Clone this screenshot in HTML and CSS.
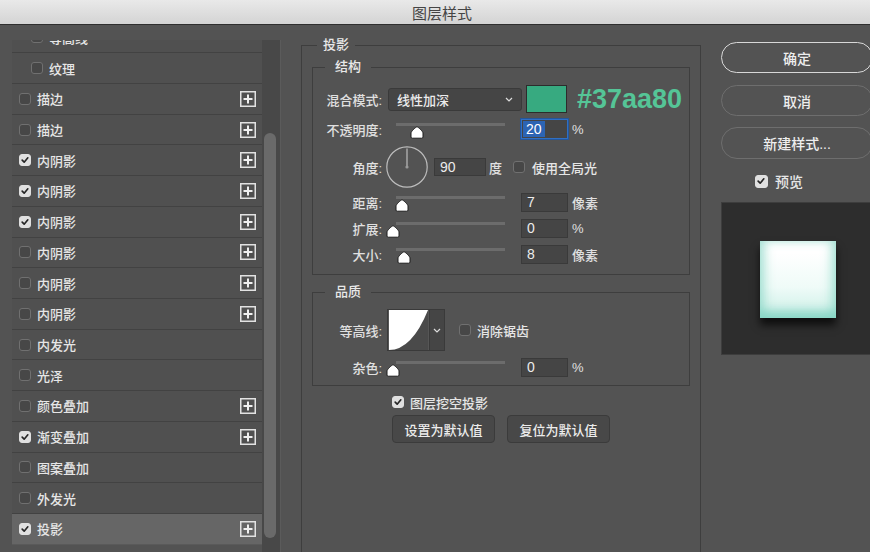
FILE: index.html
```html
<!DOCTYPE html>
<html lang="zh-CN">
<head>
<meta charset="utf-8">
<title>图层样式</title>
<link rel="stylesheet" href="styles.css">
</head>
<body>
<div class="titlebar">图层样式</div>
<div class="main">
  <aside class="sidebar">
    <div class="list">
      <div class="rows">
        <div class="row sub"><span class="cb"></span><span class="name">等高线</span></div>
        <div class="row sub"><span class="cb"></span><span class="name">纹理</span></div>
        <div class="row"><span class="cb"></span><span class="name">描边</span><svg class="plus" viewBox="0 0 16 16"><rect x="0.75" y="0.75" width="14.5" height="14.5"/><path d="M8 3.5V12.5M3.5 8H12.5"/></svg></div>
        <div class="row"><span class="cb"></span><span class="name">描边</span><svg class="plus" viewBox="0 0 16 16"><rect x="0.75" y="0.75" width="14.5" height="14.5"/><path d="M8 3.5V12.5M3.5 8H12.5"/></svg></div>
        <div class="row"><span class="cb on"><svg viewBox="0 0 12 12"><path d="M2.6 6.2L5 8.6L9.4 3.4"/></svg></span><span class="name">内阴影</span><svg class="plus" viewBox="0 0 16 16"><rect x="0.75" y="0.75" width="14.5" height="14.5"/><path d="M8 3.5V12.5M3.5 8H12.5"/></svg></div>
        <div class="row"><span class="cb on"><svg viewBox="0 0 12 12"><path d="M2.6 6.2L5 8.6L9.4 3.4"/></svg></span><span class="name">内阴影</span><svg class="plus" viewBox="0 0 16 16"><rect x="0.75" y="0.75" width="14.5" height="14.5"/><path d="M8 3.5V12.5M3.5 8H12.5"/></svg></div>
        <div class="row"><span class="cb on"><svg viewBox="0 0 12 12"><path d="M2.6 6.2L5 8.6L9.4 3.4"/></svg></span><span class="name">内阴影</span><svg class="plus" viewBox="0 0 16 16"><rect x="0.75" y="0.75" width="14.5" height="14.5"/><path d="M8 3.5V12.5M3.5 8H12.5"/></svg></div>
        <div class="row"><span class="cb"></span><span class="name">内阴影</span><svg class="plus" viewBox="0 0 16 16"><rect x="0.75" y="0.75" width="14.5" height="14.5"/><path d="M8 3.5V12.5M3.5 8H12.5"/></svg></div>
        <div class="row"><span class="cb"></span><span class="name">内阴影</span><svg class="plus" viewBox="0 0 16 16"><rect x="0.75" y="0.75" width="14.5" height="14.5"/><path d="M8 3.5V12.5M3.5 8H12.5"/></svg></div>
        <div class="row"><span class="cb"></span><span class="name">内阴影</span><svg class="plus" viewBox="0 0 16 16"><rect x="0.75" y="0.75" width="14.5" height="14.5"/><path d="M8 3.5V12.5M3.5 8H12.5"/></svg></div>
        <div class="row"><span class="cb"></span><span class="name">内发光</span></div>
        <div class="row"><span class="cb"></span><span class="name">光泽</span></div>
        <div class="row"><span class="cb"></span><span class="name">颜色叠加</span><svg class="plus" viewBox="0 0 16 16"><rect x="0.75" y="0.75" width="14.5" height="14.5"/><path d="M8 3.5V12.5M3.5 8H12.5"/></svg></div>
        <div class="row"><span class="cb on"><svg viewBox="0 0 12 12"><path d="M2.6 6.2L5 8.6L9.4 3.4"/></svg></span><span class="name">渐变叠加</span><svg class="plus" viewBox="0 0 16 16"><rect x="0.75" y="0.75" width="14.5" height="14.5"/><path d="M8 3.5V12.5M3.5 8H12.5"/></svg></div>
        <div class="row"><span class="cb"></span><span class="name">图案叠加</span></div>
        <div class="row"><span class="cb"></span><span class="name">外发光</span></div>
        <div class="row sel"><span class="cb on"><svg viewBox="0 0 12 12"><path d="M2.6 6.2L5 8.6L9.4 3.4"/></svg></span><span class="name">投影</span><svg class="plus" viewBox="0 0 16 16"><rect x="0.75" y="0.75" width="14.5" height="14.5"/><path d="M8 3.5V12.5M3.5 8H12.5"/></svg></div>
      </div>
    </div>
    <div class="scroll"><div class="thumb"></div></div>
  </aside>

  <fieldset class="panel">
    <legend>投影</legend>
    <fieldset class="group">
      <legend>结构</legend>
      <div class="frow r-blend">
        <span class="lbl">混合模式:</span>
        <div class="select"><span>线性加深</span><svg class="chev" viewBox="0 0 8 5"><path d="M1 1L4 4L7 1"/></svg></div>
        <div class="swatch"></div>
        <span class="hex">#37aa80</span>
      </div>
      <div class="frow r-opacity">
        <span class="lbl">不透明度:</span>
        <div class="slider"><div class="track"></div><svg class="knob" style="left:24px" viewBox="0 0 14 13"><path d="M7 0.8C8 0.8 13 5.4 13 7V11Q13 12.2 11.8 12.2H2.2Q1 12.2 1 11V7C1 5.4 6 0.8 7 0.8Z"/></svg></div>
        <div class="num focus"><span class="hl">20</span></div>
        <span class="unit">%</span>
      </div>
      <div class="frow r-angle">
        <span class="lbl">角度:</span>
        <svg class="dial" viewBox="0 0 42 42"><circle cx="21" cy="21" r="20.2"/><path d="M21 21V2.5"/><circle class="dot" cx="21" cy="21" r="1.6"/></svg>
        <div class="num angle">90</div>
        <span class="unit">度</span>
        <span class="cb gl"></span><span>使用全局光</span>
      </div>
      <div class="frow r-small">
        <span class="lbl">距离:</span>
        <div class="slider"><div class="track"></div><svg class="knob" style="left:9px" viewBox="0 0 14 13"><path d="M7 0.8C8 0.8 13 5.4 13 7V11Q13 12.2 11.8 12.2H2.2Q1 12.2 1 11V7C1 5.4 6 0.8 7 0.8Z"/></svg></div>
        <div class="num">7</div>
        <span class="unit">像素</span>
      </div>
      <div class="frow r-small">
        <span class="lbl">扩展:</span>
        <div class="slider"><div class="track"></div><svg class="knob" style="left:0px" viewBox="0 0 14 13"><path d="M7 0.8C8 0.8 13 5.4 13 7V11Q13 12.2 11.8 12.2H2.2Q1 12.2 1 11V7C1 5.4 6 0.8 7 0.8Z"/></svg></div>
        <div class="num">0</div>
        <span class="unit">%</span>
      </div>
      <div class="frow r-small">
        <span class="lbl">大小:</span>
        <div class="slider"><div class="track"></div><svg class="knob" style="left:11px" viewBox="0 0 14 13"><path d="M7 0.8C8 0.8 13 5.4 13 7V11Q13 12.2 11.8 12.2H2.2Q1 12.2 1 11V7C1 5.4 6 0.8 7 0.8Z"/></svg></div>
        <div class="num">8</div>
        <span class="unit">像素</span>
      </div>
    </fieldset>

    <fieldset class="group quality">
      <legend>品质</legend>
      <div class="frow r-contour">
        <span class="lbl">等高线:</span>
        <div class="contour">
          <svg class="curve" viewBox="0 0 41 42"><rect width="41" height="42" fill="#ffffff"/><path d="M0 42Q24 42 41 0V42Z" fill="#4a4a4a"/></svg>
          <div class="drop"><svg class="chev" viewBox="0 0 8 5"><path d="M1 1L4 4L7 1"/></svg></div>
        </div>
        <span class="cb aa"></span><span>消除锯齿</span>
      </div>
      <div class="frow r-noise">
        <span class="lbl">杂色:</span>
        <div class="slider"><div class="track"></div><svg class="knob" style="left:0px" viewBox="0 0 14 13"><path d="M7 0.8C8 0.8 13 5.4 13 7V11Q13 12.2 11.8 12.2H2.2Q1 12.2 1 11V7C1 5.4 6 0.8 7 0.8Z"/></svg></div>
        <div class="num">0</div>
        <span class="unit">%</span>
      </div>
    </fieldset>

    <div class="knockout"><span class="cb on"><svg viewBox="0 0 12 12"><path d="M2.6 6.2L5 8.6L9.4 3.4"/></svg></span><span>图层挖空投影</span></div>
    <div class="btnrow">
      <div class="btn">设置为默认值</div>
      <div class="btn">复位为默认值</div>
    </div>
  </fieldset>

  <aside class="side">
    <div class="pill primary">确定</div>
    <div class="pill">取消</div>
    <div class="pill tall">新建样式...</div>
    <div class="pcheck"><span class="cb on"><svg viewBox="0 0 12 12"><path d="M2.6 6.2L5 8.6L9.4 3.4"/></svg></span><span>预览</span></div>
    <div class="preview"><div class="sample"></div></div>
  </aside>
</div>
</body>
</html>
```

FILE: styles.css
```css
* { box-sizing: border-box; }
html, body { margin: 0; }
body {
  width: 870px;
  height: 552px;
  overflow: hidden;
  background: #535353;
  font-family: "Liberation Sans", "Noto Sans CJK SC", sans-serif;
  font-size: 13px;
  font-weight: 500;
  color: #e6e6e6;
}

.titlebar {
  height: 25px;
  border-bottom: 1px solid #2f2f2f;
  background: linear-gradient(#e9e9e9, #d4d4d4);
  display: flex;
  align-items: center;
  justify-content: center;
  padding-left: 14px;
  font-family: "Noto Sans CJK SC", sans-serif;
  font-size: 15px;
  font-weight: 400;
  color: #454545;
}

.main { display: flex; height: 527px; overflow: hidden; }

/* left list */
.sidebar { display: flex; flex: none; width: 282px; padding: 15px 0 0 12px; }
.list { width: 250px; height: 505px; overflow: hidden; background: #505050; }
.rows { margin-top: -17.5px; }
.row {
  height: 30.73px;
  border-bottom: 1px solid #424242;
  display: flex;
  align-items: center;
  padding: 0 6px 0 7px;
}
.row.sub { padding-left: 19px; }
.row.sel { background: #666666; border-bottom-color: #5a5a5a; }
.name { flex: 1; }

.cb {
  width: 12px;
  height: 12px;
  flex: none;
  margin-right: 6px;
  border: 1px solid #707070;
  border-radius: 3px;
  background: #474747;
  display: flex;
}
.cb.on { background: #e0e0e0; border-color: #e0e0e0; }
.cb svg { width: 10px; height: 10px; }
.cb svg path { fill: none; stroke: #262626; stroke-width: 2; stroke-linecap: round; stroke-linejoin: round; }

.plus { width: 16px; height: 16px; flex: none; }
.plus rect { fill: none; stroke: #e2e2e2; stroke-width: 1.5; }
.plus path { stroke: #f0f0f0; stroke-width: 2; }

.scroll {
  width: 19px;
  height: 512px;
  background: #484848;
  border-right: 1px solid #5b5b5b;
  padding: 93px 0 0 2px;
}
.thumb { width: 12px; height: 405px; border-radius: 6px; background: #6a6a6a; }

/* center panel */
fieldset { margin: 0; min-width: 0; border: 1px solid #3e3e3e; }
legend { padding: 0 6px; line-height: 14px; font-size: 13px; color: #e8e8e8; }

.panel {
  flex: none;
  width: 400px;
  height: 560px;
  margin: 13px 0 0 19px;
  padding: 8px 10px 0 10px;
}
.panel > legend { margin-left: 5px; }

.group { padding: 11px 0 7px 12px; }
.group > legend { padding: 0 10px; }
.quality { margin-top: 10px; padding-top: 5px; }

.frow { display: flex; align-items: center; }
.r-blend { height: 28px; }
.r-opacity { height: 32px; }
.r-angle { height: 44px; }
.r-small { height: 26px; }
.r-contour { height: 52px; }
.r-noise { height: 22px; }

.lbl { width: 57px; flex: none; text-align: right; color: #e0e0e0; }

.select {
  width: 134px;
  height: 23px;
  margin-left: 6px;
  padding: 0 8px 0 8px;
  display: flex;
  align-items: center;
  justify-content: space-between;
  background: #454545;
  border: 1px solid #3a3a3a;
  border-radius: 3px;
  color: #ececec;
}
.chev { width: 8px; height: 5px; }
.chev path { fill: none; stroke: #dddddd; stroke-width: 1.2; }

.swatch {
  width: 41px;
  height: 28px;
  margin-left: 4px;
  background: #37aa80;
  border: 1px solid #2c2c2c;
}
.hex {
  margin-left: 10px;
  font-family: "Liberation Sans", sans-serif;
  font-weight: bold;
  font-size: 27px;
  color: #55c597;
}

.slider { position: relative; width: 131px; height: 20px; margin-left: 4px; flex: none; }
.track { width: 109px; height: 3px; margin: 4px 0 0 10px; background: #6c6c6c; }
.knob { position: absolute; top: 7px; width: 14px; height: 13px; }
.knob path { fill: #ffffff; stroke: #1c1c1c; stroke-width: 1; }

.num {
  width: 47px;
  height: 19px;
  margin-left: 4px;
  padding-left: 5px;
  display: flex;
  align-items: center;
  background: #454545;
  border: 1px solid #3a3a3a;
  font-size: 14px;
  font-weight: 400;
  color: #ececec;
  flex: none;
}
.num.focus { height: 20px; border: 1px solid #2f6fc4; box-shadow: 0 0 0 1px #24569a; padding-left: 1px; }
.hl { background: #2c64b3; color: #ffffff; padding: 0 3px; line-height: 16px; }
.unit { margin-left: 4px; color: #e0e0e0; }

.dial { width: 42px; height: 42px; margin-left: 4px; flex: none; }
.dial circle { fill: none; stroke: #bdbdbd; stroke-width: 1.2; }
.dial path { stroke: #bdbdbd; stroke-width: 1.2; }
.dial .dot { fill: #9a9a9a; stroke: none; }
.num.angle { width: 52px; height: 18px; margin-left: 6px; }
.r-angle .unit { margin-left: 3px; }
.cb.gl { margin-left: 11px; margin-right: 7px; }

.contour { display: flex; height: 42px; margin-left: 5px; border: 1px solid #3a3a3a; flex: none; }
.curve { width: 41px; height: 40px; display: block; }
.drop {
  width: 15px;
  display: flex;
  align-items: center;
  justify-content: center;
  background: #454545;
  border-left: 1px solid #3a3a3a;
}
.cb.aa { margin-left: 14px; }

.knockout { display: flex; align-items: center; height: 16px; margin: 8px 0 0 80px; }
.btnrow { display: flex; gap: 12px; margin: 5px 0 0 80px; }
.btn {
  width: 103px;
  height: 28px;
  display: flex;
  align-items: center;
  justify-content: center;
  background: #484848;
  border: 1px solid #3b3b3b;
  border-radius: 4px;
  color: #ececec;
}

/* right column */
.side { flex: none; width: 152px; margin-left: 20px; padding-top: 17px; display: flex; flex-direction: column; }
.pill {
  height: 31px;
  border: 1px solid #6e6e6e;
  border-radius: 16px;
  display: flex;
  align-items: center;
  justify-content: center;
  font-size: 14px;
  color: #eeeeee;
}
.pill + .pill { margin-top: 12px; }
.pill.tall { height: 32px; margin-top: 11px; }
.pill.primary { border: 1.5px solid #d8d8d8; }
.pcheck { display: flex; align-items: center; height: 16px; margin-top: 14px; padding-left: 34px; font-size: 14px; }
.pcheck .cb { width: 13px; height: 13px; margin-right: 7px; }
.preview {
  height: 153px;
  margin-top: 13px;
  padding: 38px 0 0 38px;
  background: #2d2d2d;
  border: 1px solid #3d3d3d;
}
.sample {
  width: 76px;
  height: 77px;
  background: linear-gradient(#ffffff 15%, #effbf8 60%, #c9eee5 100%);
  box-shadow: inset 0 -8px 9px rgba(110, 205, 185, 0.55), inset 7px 0 9px rgba(150, 220, 205, 0.45), inset -7px 0 9px rgba(150, 220, 205, 0.45), 0 7px 8px rgba(0, 0, 0, 0.7);
}
```
